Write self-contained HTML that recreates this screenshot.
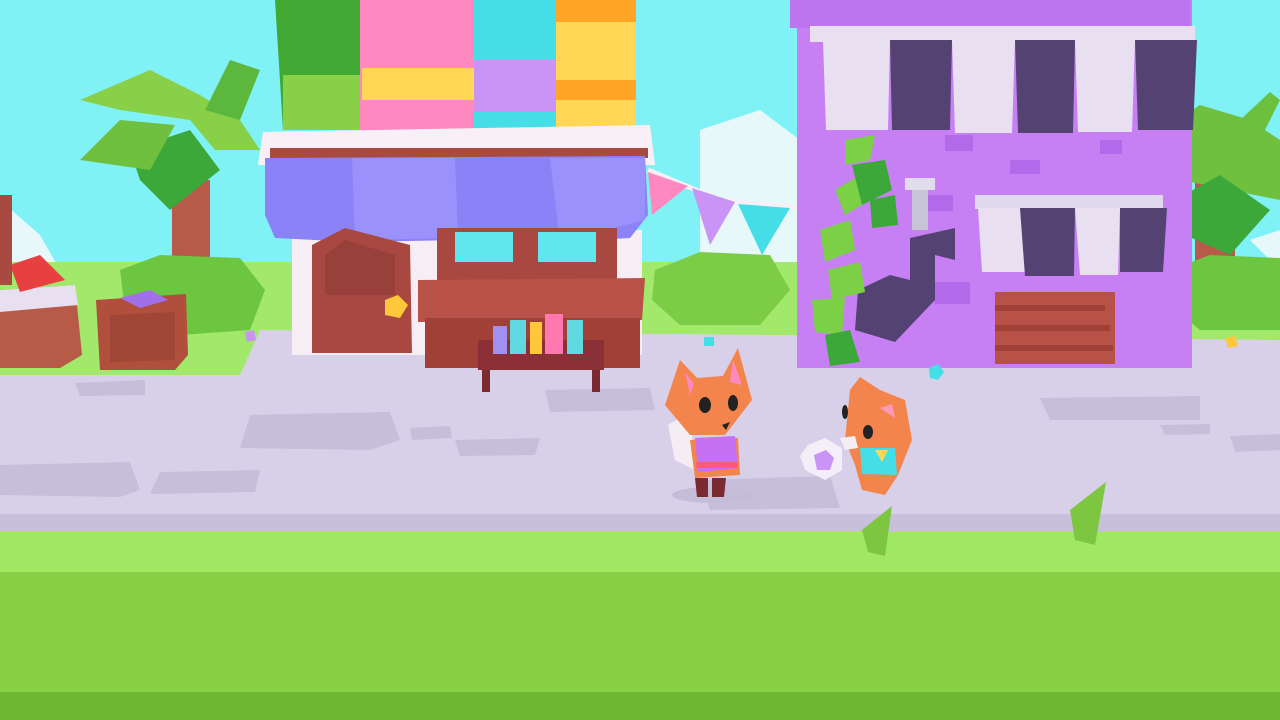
<!DOCTYPE html>
<html><head><meta charset="utf-8"><style>html,body{margin:0;padding:0;overflow:hidden;width:1280px;height:720px}svg{display:block}</style></head><body>
<svg width="1280" height="720" viewBox="0 0 1280 720" xmlns="http://www.w3.org/2000/svg">
<rect width="1280" height="720" fill="#80f2f6"/>
<!-- distant mountains -->
<polygon points="0,200 40,235 60,270 0,270" fill="#e8f8fa"/>
<polygon points="700,130 760,110 800,140 800,270 700,270" fill="#e6f8fa"/>
<polygon points="1250,240 1280,230 1280,270" fill="#e6f8fa"/>
<!-- background grass -->
<rect x="0" y="262" width="1280" height="120" fill="#a2e86a"/>
<!-- palm left -->
<rect x="172" y="180" width="38" height="90" fill="#b85a4a"/>
<polygon points="80,100 150,70 200,95 240,120 260,150 215,150 190,120 120,110" fill="#88d048"/>
<polygon points="130,150 190,130 220,170 170,210 140,180" fill="#3ca83a"/>
<polygon points="80,160 120,120 175,125 150,170" fill="#70c040"/>
<polygon points="205,110 230,60 260,70 240,120" fill="#5cb83c"/>
<!-- palm right -->
<rect x="1195" y="180" width="40" height="100" fill="#b85a4a"/>
<polygon points="1160,130 1200,105 1250,120 1280,140 1280,200 1230,190 1180,180" fill="#70c040"/>
<polygon points="1175,200 1220,175 1270,210 1230,255 1185,235" fill="#3ca83a"/>
<polygon points="1240,120 1270,92 1280,100 1265,130" fill="#6cc040"/>
<!-- bushes -->
<polygon points="120,270 160,255 240,258 265,290 250,330 180,335 125,310" fill="#6cc640"/>
<polygon points="655,270 700,252 770,255 790,290 760,325 680,325 652,300" fill="#7ccc46"/>
<polygon points="1170,270 1210,255 1280,258 1280,330 1200,330 1170,305" fill="#6cc640"/>
<!-- sidewalk -->
<polygon points="0,375 240,375 260,330 1280,340 1280,516 0,516" fill="#d8d0e8"/>
<rect x="0" y="514" width="1280" height="18" fill="#c8bfdb"/>
<!-- paving stones -->
<g fill="#c7bedb">
<polygon points="250,415 390,412 400,440 370,450 240,448"/>
<polygon points="0,465 130,462 140,490 120,497 0,495"/>
<polygon points="160,472 260,470 255,492 150,494"/>
<polygon points="455,440 540,438 535,455 460,456"/>
<polygon points="545,390 650,388 655,410 550,412"/>
<polygon points="75,383 145,380 145,395 80,396"/>
<polygon points="1040,398 1200,396 1200,420 1050,420"/>
<polygon points="1230,436 1280,434 1280,450 1235,452"/>
<polygon points="410,428 450,426 452,438 412,440"/>
<polygon points="1160,425 1210,424 1210,434 1165,435"/>
<polygon points="700,480 830,476 840,508 710,510"/>
</g>
<!-- grass foreground -->
<rect x="0" y="532" width="1280" height="42" fill="#a0e862"/>
<rect x="0" y="572" width="1280" height="122" fill="#88d046"/>
<rect x="0" y="692" width="1280" height="28" fill="#6cb832"/>
<polygon points="862,530 892,506 885,556 868,552" fill="#7cc640"/>
<polygon points="1070,510 1106,482 1095,545 1075,540" fill="#7cc640"/>
<!-- left crates -->
<polygon points="0,290 75,285 82,355 60,368 0,368" fill="#b85a48"/>
<polygon points="0,290 75,285 78,305 0,312" fill="#e8e0f0"/>
<polygon points="10,265 40,255 65,280 20,292" fill="#e84040"/>
<rect x="0" y="195" width="12" height="90" fill="#a84a40"/>
<polygon points="96,300 186,294 188,355 175,370 100,370" fill="#b0503c"/>
<polygon points="110,315 175,312 175,360 110,362" fill="#a04636"/>
<polygon points="120,298 150,290 168,300 140,308" fill="#a070e8"/>
<!-- LEFT SHOP -->
<polygon points="275,0 365,0 365,130 283,130" fill="#42a834"/>
<rect x="283" y="75" width="82" height="55" fill="#88d048"/>
<rect x="360" y="0" width="115" height="135" fill="#ff88c0"/>
<rect x="362" y="68" width="112" height="32" fill="#ffd656"/>
<rect x="474" y="0" width="82" height="132" fill="#46dee6"/>
<rect x="474" y="60" width="82" height="52" fill="#c994f6"/>
<rect x="556" y="0" width="80" height="133" fill="#ffd656"/>
<rect x="556" y="0" width="80" height="22" fill="#ffa424"/>
<rect x="556" y="80" width="80" height="20" fill="#ffa424"/>
<polygon points="263,132 650,125 655,165 258,165" fill="#f8f0f6"/>
<rect x="270" y="148" width="378" height="10" fill="#a84a40"/>
<rect x="292" y="230" width="350" height="125" fill="#f6eef4"/>
<polygon points="265,158 645,156 648,215 630,238 560,242 460,240 355,242 275,238 265,215" fill="#8a82f6"/>
<g fill="#9a92fa"><polygon points="352,158 455,158 458,238 355,240"/><polygon points="550,158 645,158 645,220 560,242"/></g>
<polygon points="312,245 345,228 410,245 412,353 312,353" fill="#a84840"/>
<polygon points="325,255 345,240 395,255 395,295 325,295" fill="#98403a"/>
<polygon points="385,300 398,295 408,305 400,318 385,315" fill="#ffc83a"/>
<rect x="437" y="228" width="180" height="52" fill="#a84840"/>
<rect x="455" y="232" width="58" height="30" fill="#60e6ee"/>
<rect x="538" y="232" width="58" height="30" fill="#60e6ee"/>
<polygon points="418,280 645,278 642,320 418,322" fill="#b85248"/>
<rect x="425" y="318" width="215" height="50" fill="#a04036"/>
<rect x="478" y="340" width="126" height="30" fill="#8a3036"/>
<rect x="482" y="370" width="8" height="22" fill="#7a2a30"/><rect x="592" y="370" width="8" height="22" fill="#7a2a30"/>
<rect x="493" y="326" width="14" height="28" fill="#a090f0"/>
<rect x="510" y="320" width="16" height="34" fill="#60d8e0"/>
<rect x="530" y="322" width="12" height="32" fill="#ffc83a"/>
<rect x="545" y="314" width="18" height="40" fill="#ff78b0"/>
<rect x="567" y="320" width="16" height="34" fill="#60d8e0"/>
<!-- bunting -->
<polyline points="648,170 720,200 820,210" stroke="#f8f0f6" stroke-width="5" fill="none"/>
<polygon points="648,172 688,186 652,215" fill="#ff88c0"/>
<polygon points="692,188 735,202 710,245" fill="#c994f6"/>
<polygon points="738,204 790,208 762,255" fill="#46dee6"/>
<!-- PURPLE BUILDING -->
<rect x="797" y="0" width="395" height="368" fill="#c780f4"/>
<rect x="790" y="0" width="400" height="28" fill="#be74ee"/>
<rect x="810" y="26" width="385" height="16" fill="#e8e0f0"/>
<g fill="#e8e0f0"><polygon points="823,40 890,40 888,130 826,130"/><polygon points="952,40 1015,40 1012,133 955,133"/><polygon points="1075,40 1135,40 1132,132 1078,132"/></g>
<g fill="#544272"><polygon points="890,40 952,40 950,130 892,130"/><polygon points="1015,40 1075,40 1073,133 1018,133"/><polygon points="1135,40 1197,40 1193,130 1138,130"/></g>
<g fill="#b468ea"><rect x="945" y="135" width="28" height="16"/><rect x="1100" y="140" width="22" height="14"/><rect x="1010" y="160" width="30" height="14"/><rect x="935" y="282" width="35" height="22"/><rect x="925" y="195" width="28" height="16"/></g>
<rect x="975" y="195" width="188" height="14" fill="#e0d8ec"/>
<g fill="#e8e0f0"><polygon points="978,208 1020,208 1025,272 982,272"/><polygon points="1075,208 1120,208 1118,275 1080,275"/></g>
<g fill="#544272"><polygon points="1020,208 1075,208 1074,276 1025,276"/><polygon points="1120,208 1167,208 1163,272 1120,272"/></g>
<rect x="995" y="292" width="120" height="72" fill="#b85248"/>
<g fill="#a04036"><rect x="995" y="305" width="110" height="6"/><rect x="995" y="325" width="115" height="6"/><rect x="995" y="345" width="118" height="6"/></g>
<!-- music note sign -->
<rect x="905" y="178" width="30" height="12" fill="#e0dcec"/>
<rect x="912" y="190" width="16" height="40" fill="#c8c4d8"/>
<polygon points="910,238 955,228 955,260 935,255 935,300 895,342 855,330 858,290 890,275 910,280" fill="#544272"/>
<!-- ivy -->
<g fill="#7cd046">
<polygon points="835,190 860,175 870,200 845,215"/><polygon points="820,230 850,220 855,250 825,262"/>
<polygon points="828,270 860,262 865,292 832,300"/><polygon points="812,300 845,298 842,335 815,332"/>
<polygon points="845,140 875,135 870,160 845,165"/>
</g>
<g fill="#3ca83a">
<polygon points="852,165 885,160 892,190 862,205"/><polygon points="825,335 850,330 860,362 830,366"/><polygon points="870,200 895,195 898,225 872,228"/>
</g>
<!-- shadows of chars -->
<ellipse cx="712" cy="495" rx="40" ry="8" fill="#c5bcd8"/>
<!-- fox 1 -->
<polygon points="668,425 690,412 695,470 675,460" fill="#f4eef4"/>
<polygon points="695,478 708,478 708,497 697,497" fill="#7a2a30"/>
<polygon points="712,478 726,478 724,497 712,497" fill="#7a2a30"/>
<polygon points="690,440 738,438 740,475 695,478" fill="#f2844c"/>
<polygon points="695,438 735,436 738,468 698,472" fill="#c670f2"/>
<rect x="696" y="462" width="42" height="6" fill="#ff5a78"/>
<polygon points="680,360 697,378 723,376 738,348 752,400 725,435 690,435 665,405" fill="#f2844c"/>
<polygon points="685,372 694,384 690,395" fill="#ff88c0"/>
<polygon points="733,360 742,385 730,382" fill="#ff88c0"/>
<ellipse cx="705" cy="405" rx="6" ry="8" fill="#222"/><ellipse cx="733" cy="403" rx="5" ry="8" fill="#222"/>
<polygon points="722,425 730,422 726,430" fill="#222"/>
<!-- ball -->
<polygon points="808,445 825,438 842,448 842,470 825,480 805,470 800,456" fill="#f4eef8"/>
<polygon points="814,455 826,450 834,458 830,470 817,470" fill="#c994f6"/>
<!-- fox 2 -->
<polygon points="850,390 860,377 880,390 905,400 912,440 898,475 885,495 862,490 855,465 845,440" fill="#f2844c"/>
<polygon points="860,448 895,448 897,475 862,474" fill="#46dee6"/>
<polygon points="875,450 888,450 882,462" fill="#ffd656"/>
<ellipse cx="845" cy="412" rx="3" ry="7" fill="#222"/><ellipse cx="868" cy="432" rx="5" ry="7" fill="#222"/>
<polygon points="840,438 855,436 858,448 845,450" fill="#f4eef4"/>
<polygon points="880,408 892,404 895,418" fill="#ff98b8"/>
<!-- gems -->
<polygon points="929,368 938,364 944,372 938,380 930,378" fill="#46dee6"/>
<polygon points="704,337 714,337 714,346 704,346" fill="#46dee6"/>
<polygon points="245,332 254,330 256,340 247,342" fill="#c994f6"/>
<polygon points="1225,338 1235,336 1238,346 1228,348" fill="#ffc83a"/>
</svg>
</body></html>
